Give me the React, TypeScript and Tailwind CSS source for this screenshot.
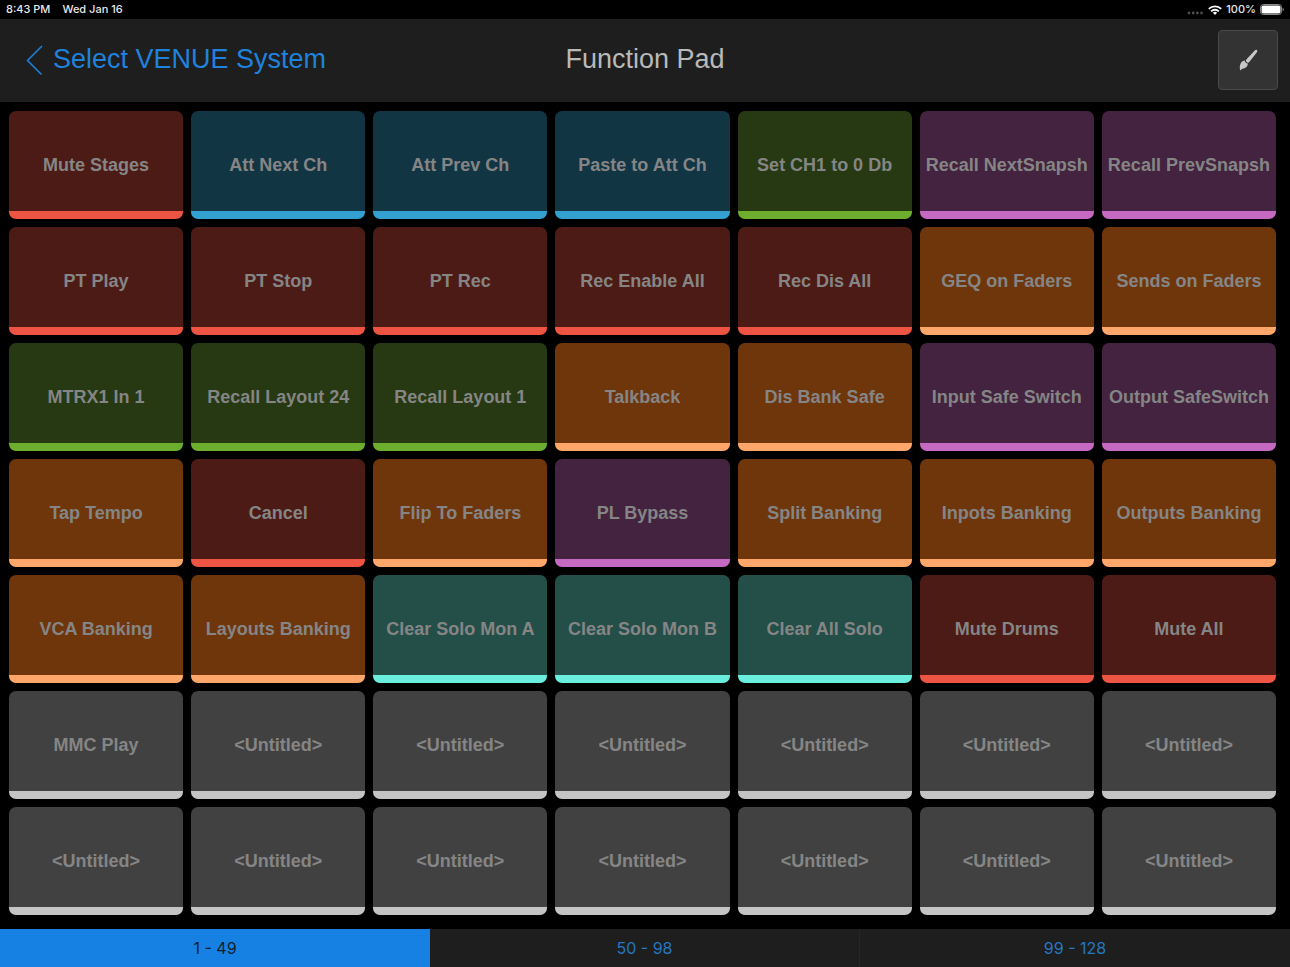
import { useState } from "react";

const COLORS = {
  red: "bg-[#4d1b16] border-[#ee5443]",
  blue: "bg-[#123544] border-[#33a1d0]",
  green: "bg-[#263912] border-[#6dae2f]",
  purple: "bg-[#43233f] border-[#c569c3]",
  orange: "bg-[#6f360c] border-[#ffa66b]",
  teal: "bg-[#244f49] border-[#6aeedd]",
  gray: "bg-[#414141] border-[#c4c4c4]",
};

interface Pad {
  name: string;
  color: keyof typeof COLORS;
}

const PADS: Pad[] = [
  { name: "Mute Stages", color: "red" },
  { name: "Att Next Ch", color: "blue" },
  { name: "Att Prev Ch", color: "blue" },
  { name: "Paste to Att Ch", color: "blue" },
  { name: "Set CH1 to 0 Db", color: "green" },
  { name: "Recall NextSnapsh", color: "purple" },
  { name: "Recall PrevSnapsh", color: "purple" },

  { name: "PT Play", color: "red" },
  { name: "PT Stop", color: "red" },
  { name: "PT Rec", color: "red" },
  { name: "Rec Enable All", color: "red" },
  { name: "Rec Dis All", color: "red" },
  { name: "GEQ on Faders", color: "orange" },
  { name: "Sends on Faders", color: "orange" },

  { name: "MTRX1 In 1", color: "green" },
  { name: "Recall Layout 24", color: "green" },
  { name: "Recall Layout 1", color: "green" },
  { name: "Talkback", color: "orange" },
  { name: "Dis Bank Safe", color: "orange" },
  { name: "Input Safe Switch", color: "purple" },
  { name: "Output SafeSwitch", color: "purple" },

  { name: "Tap Tempo", color: "orange" },
  { name: "Cancel", color: "red" },
  { name: "Flip To Faders", color: "orange" },
  { name: "PL Bypass", color: "purple" },
  { name: "Split Banking", color: "orange" },
  { name: "Inpots Banking", color: "orange" },
  { name: "Outputs Banking", color: "orange" },

  { name: "VCA Banking", color: "orange" },
  { name: "Layouts Banking", color: "orange" },
  { name: "Clear Solo Mon A", color: "teal" },
  { name: "Clear Solo Mon B", color: "teal" },
  { name: "Clear All Solo", color: "teal" },
  { name: "Mute Drums", color: "red" },
  { name: "Mute All", color: "red" },

  { name: "MMC Play", color: "gray" },
];

// the rest of the first page is empty
while (PADS.length < 49) {
  PADS.push({ name: "<Untitled>", color: "gray" });
}

const PAGES = ["1 - 49", "50 - 98", "99 - 128"];

function StatusBar() {
  return (
    <div className="flex h-[19px] items-center justify-between px-1.5 font-['Inter',sans-serif] text-[11px] font-medium text-[#e8e8e8]">
      <div className="flex gap-3">
        <span>8:43 PM</span>
        <span>Wed Jan 16</span>
      </div>
      <div className="flex items-center gap-1">
        <svg width="17" height="10" viewBox="0 0 17 10" fill="#4c4c4c">
          <circle cx="2" cy="8" r="1.4" />
          <circle cx="6.2" cy="8" r="1.4" />
          <circle cx="10.4" cy="8" r="1.4" />
          <circle cx="14.6" cy="8" r="1.4" />
        </svg>
        <svg width="14" height="10" viewBox="0 0 14 10" fill="none" stroke="#fff" strokeWidth="1.8">
          <path d="M0.8 3.9a8.8 8.8 0 0 1 12.4 0" />
          <path d="M3.2 6.3a5.4 5.4 0 0 1 7.6 0" />
          <path d="M7 9.9L4.9 7.8a3 3 0 0 1 4.2 0z" fill="#fff" stroke="none" />
        </svg>
        <span>100%</span>
        <svg width="24" height="11" viewBox="0 0 24 11">
          <rect x="0.5" y="0.5" width="21" height="10" rx="2.8" fill="none" stroke="#8a8a8a" />
          <rect x="1.5" y="1.5" width="19" height="8" rx="1.8" fill="#fff" />
          <path d="M22.6 3.8c1.6.5 1.6 2.9 0 3.4z" fill="#8a8a8a" />
        </svg>
      </div>
    </div>
  );
}

function Header() {
  return (
    <header className="grid h-[83px] grid-cols-[1fr_auto_1fr] items-center bg-[#1e1e1e] px-3 pb-0.5 text-[27px] leading-8">
      <a href="#" className="flex items-center gap-2.5 pl-3.5 text-[#1f82dd]">
        <svg width="17" height="30" viewBox="0 0 17 30" fill="none" stroke="currentColor" strokeWidth="1.5">
          <path d="M16 1L1.5 15.5L15.5 29.5" />
        </svg>
        <span className="pb-0.5">Select VENUE System</span>
      </a>
      <h1 className="pb-0.5 text-[#b9b9b9]">Function Pad</h1>
      <button
        aria-label="Edit"
        className="flex size-[60px] items-center justify-center justify-self-end rounded-sm border border-[#4a4a4a] bg-[#333333]"
      >
        <svg width="20" height="22" viewBox="0 0 20 22" fill="#c8c8c8">
          <path d="M18.8 1c.8.6.6 1.500-.1 2.400l-7.200 9.400c-.9 1.100-2 1.200-2.900.3-1-.9-1-1.900 0-2.800L16.700 1.400c.8-.7 1.400-.9 2.100-.4z" />
          <path d="M6.700 11.500c.3 1.800 1.300 2.800 3.100 3.100 0 3.300-2.600 5-5.200 5.200-.9.200-1.700.9-2.300 1.800-.6-1.900-.7-3.900-.2-5.700.6-2.500 2.300-4.300 4.600-4.400z" />
        </svg>
      </button>
    </header>
  );
}

function PadButton({ pad }: { pad: Pad }) {
  return (
    <button
      className={`rounded-[7px] border-b-8 pt-2 text-lg font-bold whitespace-nowrap text-[#858585] ${COLORS[pad.color]}`}
    >
      {pad.name}
    </button>
  );
}

export default function App() {
  const [page, setPage] = useState(0);

  return (
    <div className="flex min-h-screen flex-col bg-black font-['Liberation_Sans',Arial,sans-serif]">
      <StatusBar />
      <Header />
      <main className="grid flex-1 grid-cols-7 grid-rows-7 gap-2 pt-[9px] pr-3.5 pb-3.5 pl-[9px]">
        {PADS.map((pad, i) => (
          <PadButton key={i} pad={pad} />
        ))}
      </main>
      <nav className="grid h-[38px] grid-cols-3 bg-[#1e1e1e] font-['Inter',sans-serif] text-base">
        {PAGES.map((label, i) => (
          <button
            key={label}
            onClick={() => setPage(i)}
            className={
              page === i
                ? "bg-[#1781e3] text-[#10202f]"
                : "border-r border-[#262626] text-[#2577c0] last:border-r-0"
            }
          >
            {label}
          </button>
        ))}
      </nav>
    </div>
  );
}
